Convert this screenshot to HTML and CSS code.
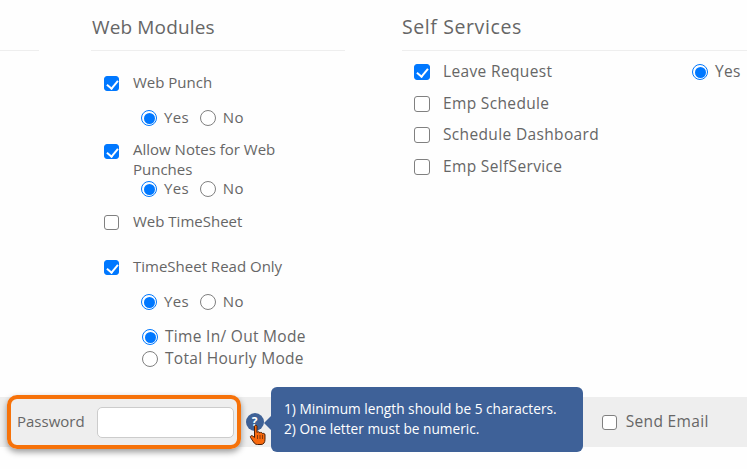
FILE: index.html
```html
<!DOCTYPE html>
<html lang="en">
<head>
   <meta charset="UTF-8">
   <meta name="viewport" content="width=device-width, initial-scale=1.0">
   <title>User Settings</title>
   <link rel="stylesheet" href="styles.css">
</head>
<body>
    <div class="columns">
        <div class="col col-stub"></div>

        <!-- Web Modules -->
        <div class="col col-web">
            <h2>Web Modules</h2>
            <div class="module-list">
                <label class="check"><input type="checkbox" checked><span>Web Punch</span></label>
                <div class="yes-no yes-no-first">
                    <label class="radio"><input type="radio" name="punch" checked>Yes</label>
                    <label class="radio"><input type="radio" name="punch">No</label>
                </div>
                <label class="check check-notes"><input type="checkbox" checked><span>Allow Notes for Web Punches</span></label>
                <div class="yes-no yes-no-notes">
                    <label class="radio"><input type="radio" name="notes" checked>Yes</label>
                    <label class="radio"><input type="radio" name="notes">No</label>
                </div>
                <label class="check check-sheet"><input type="checkbox"><span>Web TimeSheet</span></label>
                <label class="check check-read"><input type="checkbox" checked><span>TimeSheet Read Only</span></label>
                <div class="yes-no yes-no-first">
                    <label class="radio"><input type="radio" name="read" checked>Yes</label>
                    <label class="radio"><input type="radio" name="read">No</label>
                </div>
                <div class="modes">
                    <label class="radio"><input type="radio" name="mode" checked>Time In/ Out Mode</label>
                    <label class="radio"><input type="radio" name="mode">Total Hourly Mode</label>
                </div>
            </div>
        </div>

        <!-- Self Services -->
        <div class="col col-self">
            <h2>Self Services</h2>
            <div class="service-list">
                <div class="service">
                    <label class="check"><input type="checkbox" checked><span>Leave Request</span></label>
                    <label class="radio"><input type="radio" name="leave" checked>Yes</label>
                </div>
                <div class="service"><label class="check"><input type="checkbox"><span>Emp Schedule</span></label></div>
                <div class="service"><label class="check"><input type="checkbox"><span>Schedule Dashboard</span></label></div>
                <div class="service"><label class="check"><input type="checkbox"><span>Emp SelfService</span></label></div>
            </div>
        </div>
    </div>

    <!-- Password bar -->
    <div class="password-bar">
        <label class="password-label" for="password">Password</label>
        <input class="password-input" type="text" id="password">
        <span class="help-dot">?</span>
        <label class="check send-email"><input type="checkbox"><span>Send Email</span></label>

        <div class="highlight"></div>
        <div class="tip">
            1) Minimum length should be 5 characters.<br>
            2) One letter must be numeric.
        </div>
        <svg class="hand" width="18" height="22" viewBox="0 0 18 22">
            <path d="M5.5 13.5V2.5C5.5 .8 8 .8 8 2.500V8.500C8.500 7.500 10.500 7.500 10.800 9C11.300 8 13.200 8.200 13.500 9.700C14.200 9 16 9.300 16 11V15.500C16 18.500 14.500 20.500 12 20.500H8.500C6.500 20.500 5.500 19.500 4.500 18L1.500 13.500C.8 12.300 2.500 11 3.700 12Z" fill="#f8680c" stroke="#4a2008" stroke-width="1"/>
            <path d="M8.500 11V15M11 11V15M13.500 11V15" stroke="#8a3a08" stroke-width="1" fill="none"/>
        </svg>
    </div>
</body>
</html>
```

FILE: styles.css
```css
* {
    box-sizing: border-box;
}

body {
    margin: 0;
    height: 469px;
    overflow: hidden;
    background-color: #fefefe;
    font-family: "Open Sans", Arial, sans-serif;
    font-size: 15px;
    line-height: 20px;
    color: #666;
}

.columns {
    display: flex;
    height: 397px;
}

.col-stub {
    width: 39px;
    height: 51px;
    border-bottom: 1px solid #eee;
}

.col-web {
    width: 254px;
    margin-left: 52px;
}

.col-self {
    flex: 1;
    margin-left: 57px;
}

h2 {
    margin: 0;
    height: 51px;
    padding: 14px 0 0 1px;
    font-size: 19px;
    font-weight: 400;
    line-height: 26px;
    letter-spacing: 0.15px;
    border-bottom: 1px solid #eee;
}

.col-self h2 {
    padding-left: 0;
    font-size: 19.500px;
    letter-spacing: 0.6px;
}

/* checkbox and radio look */
input[type="checkbox"],
input[type="radio"] {
    appearance: none;
    flex: none;
    margin: 2px 0 0;
    position: relative;
}

input[type="checkbox"] {
    width: 15px;
    height: 15px;
    border: 1px solid #808080;
    border-radius: 3px;
    background-color: #fff;
}

input[type="checkbox"]:checked {
    background-color: #0078ff;
    border-color: #0078ff;
}

input[type="checkbox"]:checked::after {
    content: "";
    position: absolute;
    left: 4px;
    top: 1px;
    width: 5px;
    height: 9px;
    border: solid #fff;
    border-width: 0 2.5px 2.5px 0;
    transform: rotate(40deg);
}

input[type="radio"] {
    width: 16px;
    height: 16px;
    border: 1.5px solid #808080;
    border-radius: 50%;
    background-color: #fff;
}

input[type="radio"]:checked {
    border: 1.5px solid #0078ff;
    padding: 1.500px;
    background-color: #0078ff;
    background-clip: content-box;
}

.check {
    display: flex;
    align-items: center;
}

.check span {
    margin-left: 14px;
}

.radio {
    display: flex;
    align-items: center;
    gap: 7px;
    letter-spacing: 0.3px;
}

/* web modules */
.module-list {
    padding: 21px 0 0 13px;
    width: 240px;
}

.check-notes {
    align-items: flex-start;
    margin-top: 12px;
}

.check-notes input {
    margin-top: 5px;
}

.yes-no {
    display: flex;
    gap: 11px;
    padding-left: 37px;
}

.yes-no-first {
    margin-top: 15px;
}

.yes-no-notes {
    height: 18px;
    align-items: center;
}

.check-sheet {
    margin-top: 14px;
}

.check-read {
    margin-top: 25px;
}

.modes {
    display: flex;
    flex-direction: column;
    gap: 2px;
    margin-top: 15px;
    padding-left: 38px;
}

.modes .radio {
    font-size: 15.500px;
    letter-spacing: 0.3px;
}

/* self services */
.service-list {
    padding: 4.500px 0 0 12px;
    font-size: 15.500px;
    letter-spacing: 0.35px;
}

.service {
    display: flex;
    height: 31.500px;
    align-items: center;
}

.service input[type="checkbox"] {
    width: 16px;
    height: 16px;
}

.service .check {
    width: 278px;
}

.service .check span {
    margin-left: 13px;
}

/* password bar */
.password-bar {
    position: relative;
    display: flex;
    align-items: center;
    height: 50px;
    background-color: #eee;
}

.password-label {
    margin: 0 0 2px 17px;
}

.password-input {
    width: 137px;
    height: 31px;
    margin: 0 0 0 12px;
    border: 1px solid #ccc;
    border-radius: 5px;
    background-color: #fff;
}

.help-dot {
    width: 18px;
    height: 18px;
    margin-left: 12px;
    border-radius: 50%;
    background-color: #3e6196;
    color: #fff;
    font-size: 12px;
    font-weight: 700;
    line-height: 18px;
    text-align: center;
}

.send-email {
    margin: 0 0 2px 338px;
    font-size: 15.500px;
    letter-spacing: 0.35px;
}

.send-email span {
    margin-left: 9px;
}

.highlight {
    position: absolute;
    left: 7px;
    top: -2px;
    width: 234px;
    height: 54px;
    border: 4px solid #f6720a;
    border-radius: 10px;
    box-shadow: 0 3px 6px rgba(0, 0, 0, 0.4);
}

.tip {
    position: absolute;
    left: 271px;
    top: -10px;
    width: 312px;
    height: 65px;
    padding: 12px 13px;
    border-radius: 6px;
    background-color: #3e6198;
    color: #fff;
    font-size: 13.700px;
}

.tip::before {
    content: "";
    position: absolute;
    left: -7px;
    top: 29px;
    border: solid transparent;
    border-width: 7px 7px 7px 0;
    border-right-color: #3e6198;
}

.hand {
    position: absolute;
    left: 249px;
    top: 27px;
}
```
